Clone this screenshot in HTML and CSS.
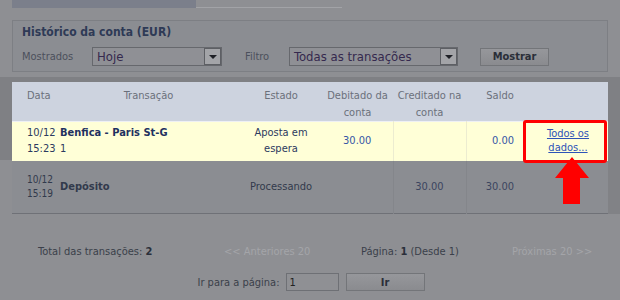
FILE: index.html
```html
<!DOCTYPE html>
<html lang="pt">
  <head>
    <meta charset="UTF-8" />
    <title>Histórico da conta</title>
    <link rel="stylesheet" href="styles.css">
  </head>
  <body>
    <div class="tabs">
      <div class="tab tab-active"></div>
      <div class="tab"></div>
    </div>

    <section class="panel">
      <h2 class="panel-title">Histórico da conta (EUR)</h2>
      <div class="filters">
        <span class="filter-label">Mostrados</span>
        <div class="select select-period">
          <span class="select-value">Hoje</span>
          <span class="select-arrow"></span>
        </div>
        <span class="filter-label filter-label-type">Filtro</span>
        <div class="select select-type">
          <span class="select-value">Todas as transações</span>
          <span class="select-arrow"></span>
        </div>
        <button class="btn btn-show">Mostrar</button>
      </div>
    </section>

    <div class="ledger">
      <table class="ledger-table">
        <thead>
          <tr class="head-row">
            <th class="col-date">Data</th>
            <th class="col-name">Transação</th>
            <th class="col-state">Estado</th>
            <th class="col-debit">Debitado da conta</th>
            <th class="col-credit">Creditado na conta</th>
            <th class="col-balance">Saldo</th>
            <th class="col-link"></th>
          </tr>
        </thead>
        <tbody>
          <tr class="row row-active">
            <td class="col-date">10/12<br>15:23</td>
            <td class="col-name"><strong>Benfica - Paris St-G</strong><br>1</td>
            <td class="col-state">Aposta em<br>espera</td>
            <td class="col-debit amount">30.00</td>
            <td class="col-credit amount sep"></td>
            <td class="col-balance amount sep">0.00</td>
            <td class="col-link"><a href="#" class="details-link">Todos os<br>dados...</a></td>
          </tr>
          <tr class="row row-dim">
            <td class="col-date small">10/12<br>15:19</td>
            <td class="col-name"><strong>Depósito</strong></td>
            <td class="col-state">Processando</td>
            <td class="col-debit amount"></td>
            <td class="col-credit amount sep">30.00</td>
            <td class="col-balance amount sep">30.00</td>
            <td class="col-link"></td>
          </tr>
        </tbody>
      </table>

      <div class="callout"></div>
      <svg class="callout-arrow" width="34" height="47" viewBox="0 0 34 47">
        <polygon points="17,0 34,21 25,21 25,47 8,47 8,21 0,21" fill="#ff0000" />
      </svg>
    </div>

    <div class="pager">
      <span class="pager-total">Total das transações: <b>2</b></span>
      <span class="pager-prev">&lt;&lt; Anteriores 20</span>
      <span class="pager-page">Página: <b>1</b> (Desde 1)</span>
      <span class="pager-next">Próximas 20 &gt;&gt;</span>
    </div>

    <div class="goto">
      <span class="goto-label">Ir para a página:</span>
      <input type="text" class="goto-input" value="1" />
      <button class="btn btn-go">Ir</button>
    </div>
  </body>
</html>
```

FILE: styles.css
```css
* {
  margin: 0;
  padding: 0;
  box-sizing: border-box;
}

body {
  font-family: "DejaVu Sans Condensed", "Liberation Sans", sans-serif;
  font-size: 11px;
  background: #8e8f93;
  color: #353a45;
  width: 620px;
  height: 300px;
  overflow: hidden;
}

/* tabs strip */
.tabs {
  display: flex;
  height: 8px;
  padding-left: 12px;
}

.tab {
  width: 146px;
  border-bottom: 1px solid #a2a3a7;
}

.tab-active {
  width: 184px;
  background: #7b7f8b;
  border-bottom: none;
}

/* filter panel */
.panel {
  margin: 12px 12px 0;
  height: 52px;
  border: 1px solid #7d7f84;
  background: #8b8d92;
  padding: 4px 9px 0;
}

.panel-title {
  font-size: 12px;
  font-weight: bold;
  line-height: 14px;
  color: #2e3a56;
}

.filters {
  display: flex;
  align-items: center;
  height: 19px;
  margin-top: 8px;
}

.filter-label {
  width: 70px;
  color: #4b505c;
}

.filter-label-type {
  width: 44px;
  margin-left: 23px;
}

.select {
  display: flex;
  align-items: center;
  height: 19px;
  border: 1px solid #66686d;
  background: #8f9095;
  padding-left: 4px;
}

.select-period {
  width: 130px;
}

.select-type {
  width: 169px;
}

.select-value {
  flex: 1;
  font-size: 13px;
  color: #35294e;
}

.select-arrow {
  width: 17px;
  height: 17px;
  border: 1px solid #5d5f64;
  background: #a3a4a8;
  display: flex;
  align-items: center;
  justify-content: center;
}

.select-arrow::after {
  content: "";
  border-left: 4px solid transparent;
  border-right: 4px solid transparent;
  border-top: 4px solid #1e2026;
  margin-top: 1px;
}

.btn {
  font-family: inherit;
  font-size: 11px;
  font-weight: bold;
  color: #2a2e38;
  background: linear-gradient(#96979b, #8a8b8f);
  border: 1px solid #737579;
  cursor: pointer;
}

.btn-show {
  width: 69px;
  height: 18px;
  margin-left: 22px;
}

/* ledger table */
.ledger {
  position: relative;
  margin-top: 5px;
  padding: 5px 12px 0;
  background:
    linear-gradient(#7f8084, #7f8084) top left / 100% 83px no-repeat,
    linear-gradient(#818286, #818286) top right / 12px 137px no-repeat;
}

.ledger-table {
  width: 596px;
  border-collapse: collapse;
  table-layout: fixed;
}

.col-date { width: 45px; text-align: left; padding-left: 15px; }
.col-name { width: 183px; text-align: left; padding-left: 3px; }
.col-state { width: 82px; text-align: center; }
.col-debit { width: 71px; text-align: center; }
.col-credit { width: 73px; text-align: center; }
.col-balance { width: 68px; text-align: center; }
.col-link { text-align: center; padding-right: 6px; }

.head-row {
  height: 39px;
  background: #cdd3df;
}

.head-row th {
  font-weight: normal;
  color: #6b707b;
  vertical-align: top;
  line-height: 17px;
  padding-top: 5px;
}

.head-row .col-name {
  text-align: center;
  padding-left: 0;
}

.row td {
  vertical-align: middle;
  line-height: 16px;
}

.row-active {
  height: 39px;
  background: #ffffd7;
  border-top: 1px solid #eef0f4;
  color: #2c3a60;
}

.row-active strong {
  color: #1f3160;
}

.row-active .amount {
  color: #3656a6;
}

.row-active .sep {
  border-left: 1px solid #ececd0;
}

.row-active .col-balance {
  text-align: right;
  padding-right: 20px;
}

.details-link {
  color: #2d53b8;
  line-height: 14px;
  display: inline-block;
}

.row-dim {
  height: 53px;
  background: #8b8d92;
  border-bottom: 1px solid #6f7177;
  color: #323a4c;
}

.row-dim .sep {
  border-left: 1px solid #84868b;
}

.row-dim .small {
  font-size: 10px;
  line-height: 14px;
}

.row-dim .amount {
  color: #3b4560;
}

.row-dim .col-balance {
  text-align: right;
  padding-right: 20px;
}

/* highlight marks drawn over the screenshot */
.callout {
  position: absolute;
  left: 523px;
  top: 43px;
  width: 84px;
  height: 43px;
  border: 3px solid #ff0000;
  border-radius: 3px;
}

.callout-arrow {
  position: absolute;
  left: 555px;
  top: 80px;
}

/* pagination */
.pager {
  display: flex;
  padding: 31px 0 0 38px;
  line-height: 14px;
  color: #3a3f4a;
}

.pager b {
  color: #2a2f3a;
}

.pager-total { width: 186px; }
.pager-prev { width: 137px; color: #a4a5a9; }
.pager-page { width: 151px; }
.pager-next { color: #a4a5a9; }

.goto {
  display: flex;
  align-items: center;
  justify-content: center;
  gap: 5px;
  margin-top: 14px;
  padding-left: 2px;
  color: #3a3f4a;
}

.goto-input {
  width: 53px;
  height: 18px;
  margin-left: 1px;
  border: 1px solid #6e7075;
  background: #8f9094;
  font-family: inherit;
  font-size: 11px;
  color: #222;
  padding-left: 3px;
}

.btn-go {
  width: 79px;
  height: 18px;
  margin-left: 2px;
}
```
